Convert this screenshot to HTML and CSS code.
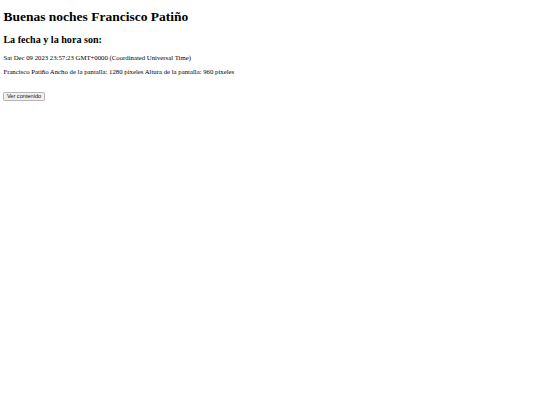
FILE: index.html
```html
<!DOCTYPE html>
<html lang="es">
<head>
<meta charset="utf-8">
<title>Saludo</title>
<link rel="stylesheet" href="styles.css">
</head>
<body>
<h1 class="title">Buenas noches Francisco Patiño</h1>
<h2 class="subtitle">La fecha y la hora son:</h2>
<p class="text">Sat Dec 09 2023 23:57:23 GMT+0000 (Coordinated Universal Time)</p>
<p class="text">Francisco Patiño Ancho de la pantalla: 1280 pixeles Altura de la pantalla: 960 pixeles</p>
<div class="actions"><button class="btn" type="button">Ver contenido</button></div>
</body>
</html>
```
FILE: styles.css
```css
html, body {
  background: #ffffff;
}
body {
  margin: 3.375px;
  font-family: "Liberation Serif", "Times New Roman", serif;
  color: #000000;
}
.title {
  font-size: 13.5px;
  font-weight: bold;
  margin: 6px 0 9.05px;
}
.subtitle {
  font-size: 10.125px;
  font-weight: bold;
  margin: 8.4px 0;
}
.text {
  font-size: 6.75px;
  margin: 6.75px 0;
}
.actions {
  display: flex;
  margin-top: 17.2px;
}
.btn {
  font-family: "Liberation Sans", Arial, sans-serif;
  font-size: 5.625px;
  line-height: normal;
  padding: 0.5px 2.5px;
  margin: 0;
  background: #f0f0f0;
  color: #111111;
  border: 0.8px solid #b4b4b4;
  border-radius: 1.2px;
}
```
